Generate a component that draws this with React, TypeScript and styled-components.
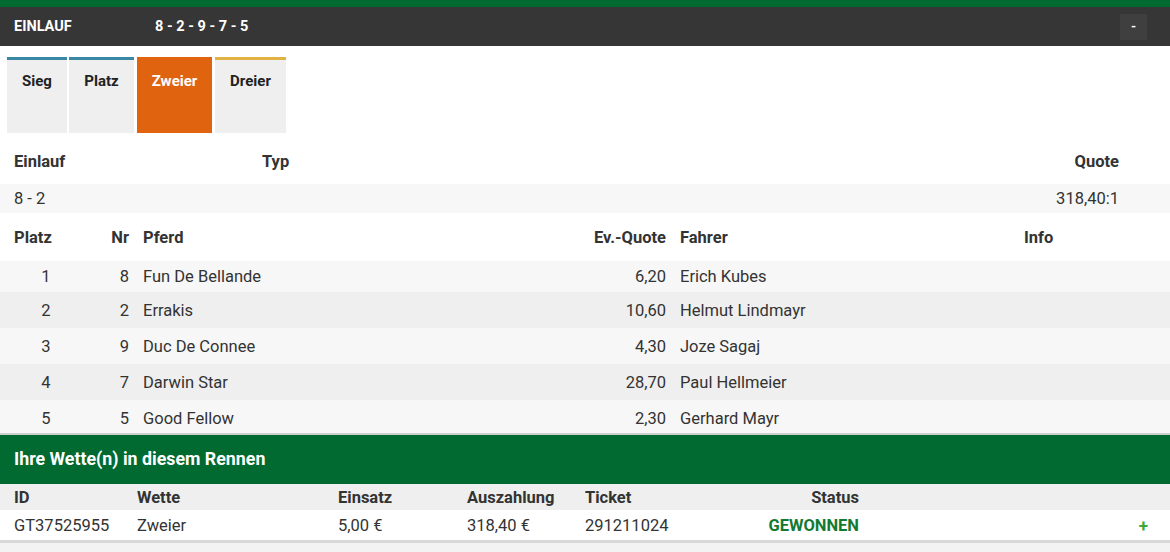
import React from "react";
import styled, { createGlobalStyle } from "styled-components";

const GlobalStyle = createGlobalStyle`
  body {
    margin: 0;
    background: #f3f3f3;
    font-family: Roboto, "Liberation Sans", Arial, sans-serif;
    color: #333;
  }
`;

const Panel = styled.div`
  background: #fff;
  border-top: 7px solid #006a31;
`;

const Header = styled.div`
  display: flex;
  align-items: center;
  height: 39px;
  background: #363636;
  color: #fff;
  font-weight: 700;
  font-size: 14.5px;
  padding: 0 23px 0 14px;
`;

const HeaderTitle = styled.div`
  width: 141px;
`;

const HeaderResult = styled.div`
  flex: 1;
`;

const ToggleButton = styled.button`
  width: 27px;
  height: 26px;
  border: none;
  background: #3f3f3f;
  color: #fff;
  font: 700 13px Roboto, sans-serif;
  padding: 0;
`;

const Tabs = styled.div`
  display: flex;
  padding: 11px 0 0 7px;
`;

const Tab = styled.div<{ $line: string; $active?: boolean; $width: number; $gap: number }>`
  width: ${({ $width }) => $width}px;
  margin-right: ${({ $gap }) => $gap}px;
  height: 76px;
  box-sizing: border-box;
  border-top: 3px solid ${({ $line }) => $line};
  background: ${({ $active }) => ($active ? "#e0630f" : "#efefef")};
  color: ${({ $active }) => ($active ? "#fff" : "#222")};
  font-weight: 700;
  font-size: 15px;
  text-align: center;
  padding-top: 12px;
`;

const Grid = styled.div<{ $cols: string; $h: number; $bg?: string; $bold?: boolean; $pt?: number }>`
  display: grid;
  grid-template-columns: ${({ $cols }) => $cols};
  align-items: center;
  box-sizing: border-box;
  height: ${({ $h }) => $h}px;
  padding-top: ${({ $pt }) => $pt ?? 0}px;
  background: ${({ $bg }) => $bg || "transparent"};
  font-size: 16.5px;
  font-weight: ${({ $bold }) => ($bold ? 700 : 400)};
  color: #333;
`;

const Cell = styled.div<{ $align?: "left" | "right" | "center"; $pl?: number; $pr?: number }>`
  text-align: ${({ $align }) => $align || "left"};
  padding-left: ${({ $pl }) => $pl ?? 7}px;
  padding-right: ${({ $pr }) => $pr ?? 7}px;
  white-space: nowrap;
`;

const ResultCols = "255px 1fr 200px 44px";
const HorseCols = "92px 44px 1fr 150px 344px 153px";
const BetCols = "130px 201px 129px 118px 150px 138px 1fr";

const HorseRows = styled.div`
  border-bottom: 2px solid #cfcfcf;
`;

const BetsTitle = styled.div`
  height: 49px;
  display: flex;
  align-items: center;
  padding: 0 0 2px 14px;
  box-sizing: border-box;
  background: #006a31;
  color: #fff;
  font-weight: 700;
  font-size: 17.8px;
`;

const BetsTable = styled.div`
  border-bottom: 3px solid #d8d8d8;
`;

const Status = styled.span`
  color: #137a31;
  font-weight: 700;
`;

const Plus = styled.span`
  color: #3aa935;
  font-weight: 700;
  font-size: 17px;
`;

const horses = [
  { platz: 1, nr: 8, pferd: "Fun De Bellande", quote: "6,20", fahrer: "Erich Kubes" },
  { platz: 2, nr: 2, pferd: "Errakis", quote: "10,60", fahrer: "Helmut Lindmayr" },
  { platz: 3, nr: 9, pferd: "Duc De Connee", quote: "4,30", fahrer: "Joze Sagaj" },
  { platz: 4, nr: 7, pferd: "Darwin Star", quote: "28,70", fahrer: "Paul Hellmeier" },
  { platz: 5, nr: 5, pferd: "Good Fellow", quote: "2,30", fahrer: "Gerhard Mayr" },
];

const tabs = [
  { label: "Sieg", line: "#3a87a3", width: 60, gap: 2 },
  { label: "Platz", line: "#3a87a3", width: 65, gap: 3 },
  { label: "Zweier", line: "#e0630f", width: 75, gap: 3, active: true },
  { label: "Dreier", line: "#e2b144", width: 71, gap: 0 },
];

export default function App() {
  return (
    <>
      <GlobalStyle />
      <Panel>
        <Header>
          <HeaderTitle>EINLAUF</HeaderTitle>
          <HeaderResult>8 - 2 - 9 - 7 - 5</HeaderResult>
          <ToggleButton>-</ToggleButton>
        </Header>
        <Tabs>
          {tabs.map((t) => (
            <Tab key={t.label} $line={t.line} $active={t.active} $width={t.width} $gap={t.gap}>
              {t.label}
            </Tab>
          ))}
        </Tabs>
        <Grid $cols={ResultCols} $h={51} $pt={5} $bold>
          <Cell $pl={14}>Einlauf</Cell>
          <Cell>Typ</Cell>
          <Cell $align="right">Quote</Cell>
          <Cell />
        </Grid>
        <Grid $cols={ResultCols} $h={29} $bg="#f7f7f7">
          <Cell $pl={14}>8 - 2</Cell>
          <Cell />
          <Cell $align="right">318,40:1</Cell>
          <Cell />
        </Grid>
        <Grid $cols={HorseCols} $h={48} $bold>
          <Cell $pl={14}>Platz</Cell>
          <Cell $align="right">Nr</Cell>
          <Cell>Pferd</Cell>
          <Cell $align="right">Ev.-Quote</Cell>
          <Cell>Fahrer</Cell>
          <Cell>Info</Cell>
        </Grid>
        <HorseRows>
          {horses.map((h, i) => (
            <Grid
              key={h.nr}
              $cols={HorseCols}
              $h={i === 0 ? 31 : i === horses.length - 1 ? 33 : 36}
              $pt={i === horses.length - 1 ? 3 : 0}
              $bg={i % 2 === 0 ? "#f7f7f7" : "#efefef"}
            >
              <Cell $align="center">{h.platz}</Cell>
              <Cell $align="right">{h.nr}</Cell>
              <Cell>{h.pferd}</Cell>
              <Cell $align="right">{h.quote}</Cell>
              <Cell>{h.fahrer}</Cell>
              <Cell />
            </Grid>
          ))}
        </HorseRows>
        <BetsTitle>Ihre Wette(n) in diesem Rennen</BetsTitle>
        <BetsTable>
          <Grid $cols={BetCols} $h={26} $bg="#efefef" $bold>
            <Cell $pl={14}>ID</Cell>
            <Cell>Wette</Cell>
            <Cell>Einsatz</Cell>
            <Cell>Auszahlung</Cell>
            <Cell>Ticket</Cell>
            <Cell $align="right">Status</Cell>
            <Cell />
          </Grid>
          <Grid $cols={BetCols} $h={30} $pt={1} $bg="#fff">
            <Cell $pl={14}>GT37525955</Cell>
            <Cell>Zweier</Cell>
            <Cell>5,00 €</Cell>
            <Cell>318,40 €</Cell>
            <Cell>291211024</Cell>
            <Cell $align="right">
              <Status>GEWONNEN</Status>
            </Cell>
            <Cell $align="right" $pr={22}>
              <Plus>+</Plus>
            </Cell>
          </Grid>
        </BetsTable>
      </Panel>
    </>
  );
}
